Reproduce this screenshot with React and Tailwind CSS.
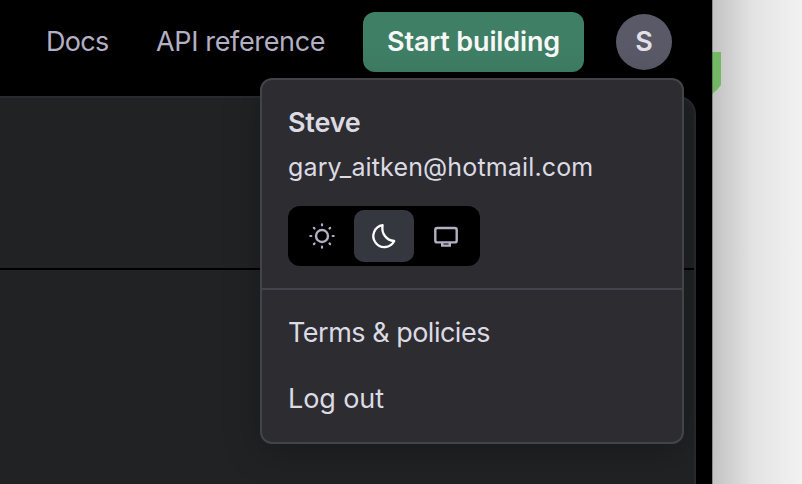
const SunIcon = () => (
  <svg width="28" height="28" viewBox="0 0 28 28" fill="none" stroke="#b4b0c3" strokeWidth="2.4">
    <circle cx="14" cy="14" r="6" />
    <path strokeLinecap="round" strokeWidth="2.2" d="M14 2.300v1M14 24.700v1M2.300 14h1M24.700 14h1M5.900 5.900l.6.6M21.500 21.500l.6.6M5.900 22.100l.6-.6M21.500 6.500l.6-.6" />
  </svg>
);

const MoonIcon = () => (
  <svg width="28" height="28" viewBox="0 0 28 28" fill="none" stroke="#fff" strokeWidth="2.3" strokeLinejoin="round">
    <path d="M12.6 3.2A11 11 0 1 0 24.2 19C16.5 18.600 11 11.500 12.600 3.200Z" />
  </svg>
);

const MonitorIcon = () => (
  <svg width="28" height="28" viewBox="0 0 28 28" fill="none" stroke="#b4b0c3" strokeWidth="2.4">
    <rect x="3.300" y="6" width="21.400" height="14.400" rx="2" />
    <path d="M10.200 20.500v3.100h7.600v-3.100" />
  </svg>
);

function ThemeSwitch() {
  return (
    <div className="mt-[20px] flex h-[60px] w-48 items-center rounded-xl bg-black px-1">
      <button className="flex h-[52px] w-[60px] items-center justify-center"><SunIcon /></button>
      <button className="ml-[2px] flex h-[52px] w-[60px] items-center justify-center rounded-[10px] bg-[#35373e]"><MoonIcon /></button>
      <button className="ml-[2px] flex h-[52px] w-[60px] items-center justify-center"><MonitorIcon /></button>
    </div>
  );
}

function AccountMenu() {
  return (
    <div className="absolute left-[260px] top-[78px] h-[366px] w-[424px] rounded-xl border-2 border-[#434349] bg-[#2c2c31] text-[#dcdae2] shadow-[0_8px_36px_rgba(0,0,0,0.25)]">
      <div className="h-[210px] border-b-2 border-[#434349] px-[26px] pt-[24px]">
        <div className="h-[38px] text-[27px] font-semibold leading-[38px] tracking-[-0.2px]">Steve</div>
        <div className="mt-[7px] h-[37px] whitespace-nowrap text-[25px] leading-[36px] tracking-[0.15px]">gary_aitken@hotmail.com</div>
        <ThemeSwitch />
      </div>
      <div className="px-[26px] pt-[10px] text-[27px]">
        <div className="h-[66px] leading-[66px] tracking-[-0.5px]">Terms &amp; policies</div>
        <div className="h-[66px] leading-[66px] tracking-[-0.1px]">Log out</div>
      </div>
    </div>
  );
}

export default function App() {
  return (
    <div className="relative flex h-[484px] w-[802px] overflow-hidden bg-[#f3f3f3] font-['Inter','Liberation_Sans',sans-serif]">
      <div className="flex w-[712px] shrink-0 flex-col bg-black">
        <header className="flex h-24 shrink-0 items-start whitespace-nowrap text-[27px] text-[#b4b0c3]">
          <a className="ml-[46px] mt-[12px] w-[110px] leading-[60px] tracking-[-0.7px]">Docs</a>
          <a className="mt-[12px] w-[207px] leading-[60px] tracking-[-0.35px]">API reference</a>
          <button className="mt-3 h-[60px] w-[221px] rounded-xl bg-[#3f7f66] pt-px text-center font-semibold tracking-[-0.15px] text-[#f7f7f7]">Start building</button>
          <div className="ml-8 mt-[14px] flex size-14 items-center justify-center rounded-full bg-[#5a5968] font-semibold text-[#e1e0e8]">S</div>
        </header>
        <main className="w-[696px] flex-1 rounded-tr-[18px] border-r-2 border-t-2 border-[#292a31] bg-[#212224]">
          <div className="h-[172px] border-b-2 border-black" />
        </main>
      </div>
      <div className="flex-1 border-l border-[#8c8c8c] bg-linear-to-r from-[#c3c3c3] via-[#e3e3e3] via-45% to-[#f2f2f2]">
        <svg className="-ml-px mt-[52px]" width="9" height="43" viewBox="0 0 9 43">
          <path d="M0 0H9V33Q5 38.500 0 42Z" fill="#74b765" />
          <path d="M0.500 0V42" stroke="#55874a" />
        </svg>
      </div>
      <AccountMenu />
    </div>
  );
}
